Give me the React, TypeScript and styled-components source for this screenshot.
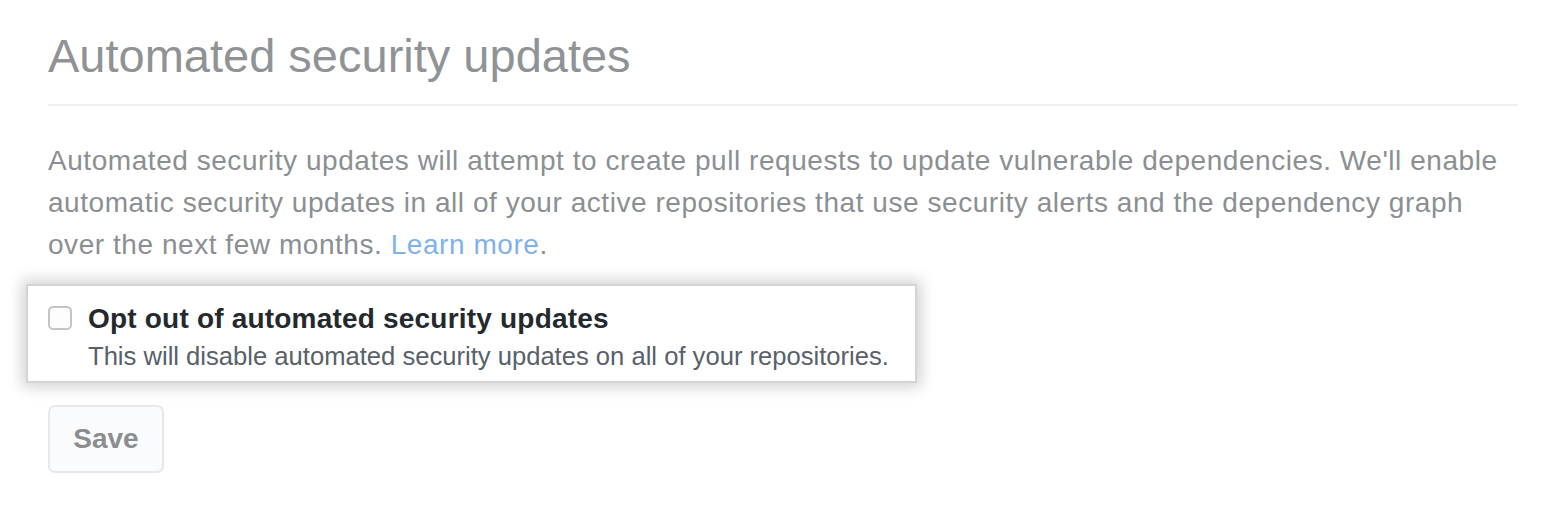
import React from "react";
import styled, { createGlobalStyle } from "styled-components";

const Global = createGlobalStyle`
  html, body { margin: 0; padding: 0; background: #ffffff; }
  body { font-family: "Liberation Sans", Arial, sans-serif; }
`;

const Page = styled.div`
  width: 1470px;
  padding: 25px 0 0 48px;
  display: flex;
  flex-direction: column;
`;

const Heading = styled.h2`
  margin: 0;
  padding-bottom: 17px;
  font-family: "Liberation Sans", Arial, sans-serif;
  font-size: 47px;
  font-weight: 400;
  line-height: 62px;
  color: #909396;
  border-bottom: 2px solid #f0f0f0;
`;

const Para = styled.p`
  margin: 34px 0 0 0;
  font-family: "Liberation Sans", Arial, sans-serif;
  font-size: 28px;
  letter-spacing: 0.55px;
  line-height: 42px;
  color: #8b8f93;
`;

const Link = styled.a`
  color: #7fb2ec;
  text-decoration: none;
`;

const Highlight = styled.div`
  margin: 18px 0 0 -22px;
  width: 847px;
  padding: 18px 20px 10px 20px;
  background: #ffffff;
  border: 2px solid #d4d4d4;
  box-shadow: 0 0 14px 4px rgba(0, 0, 0, 0.18);
  display: flex;
  gap: 16px;
  align-items: flex-start;
`;

const Box = styled.span`
  margin-top: 2px;
  flex: none;
  width: 20px;
  height: 20px;
  border: 2px solid #c4c4c4;
  border-radius: 5px;
  background: #fdfdfd;
`;

const TextCol = styled.div`
  display: flex;
  flex-direction: column;
`;

const Label = styled.div`
  font-size: 28px;
  font-weight: 700;
  letter-spacing: 0.2px;
  line-height: 30px;
  color: #24292e;
`;

const Note = styled.div`
  margin-top: 7px;
  font-size: 25.6px;
  line-height: 30px;
  color: #586069;
`;

const SaveButton = styled.button`
  margin-top: 22px;
  align-self: flex-start;
  width: 116px;
  height: 68px;
  font-family: "Liberation Sans", Arial, sans-serif;
  font-size: 28px;
  font-weight: 700;
  color: #8c8d8f;
  background: #fafbfc;
  border: 2px solid #e6e8eb;
  border-radius: 7px;
`;

export default function App() {
  return (
    <>
      <Global />
      <Page>
        <Heading>Automated security updates</Heading>
        <Para>
          Automated security updates will attempt to create pull requests to update vulnerable
          dependencies. We'll enable automatic security updates in all of your active repositories
          that use security alerts and the dependency graph over the next few months.{" "}
          <Link href="#">Learn more</Link>.
        </Para>
        <Highlight>
          <Box />
          <TextCol>
            <Label>Opt out of automated security updates</Label>
            <Note>This will disable automated security updates on all of your repositories.</Note>
          </TextCol>
        </Highlight>
        <SaveButton>Save</SaveButton>
      </Page>
    </>
  );
}
